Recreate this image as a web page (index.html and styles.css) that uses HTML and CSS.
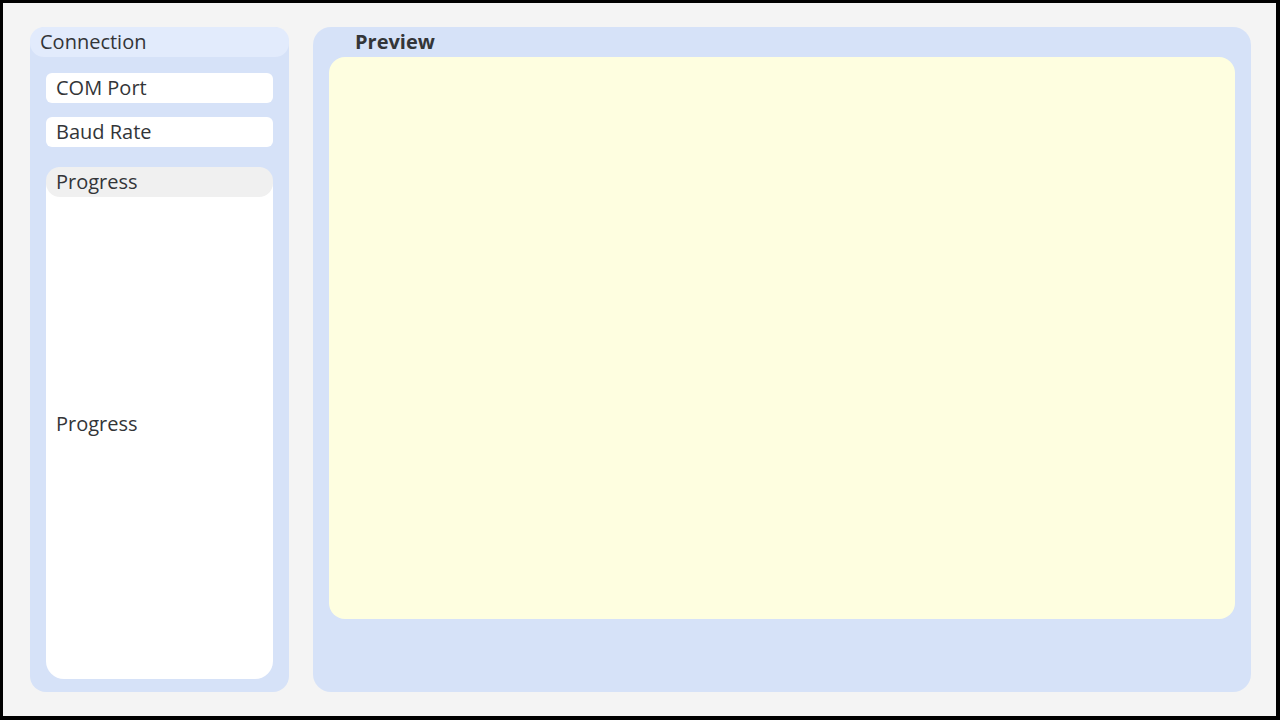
FILE: index.html
```html
<!DOCTYPE html>
<html>
<head>
<meta charset="utf-8">
<link rel="stylesheet" href="styles.css">
</head>
<body>
<div class="frame">
  <aside class="panel left">
    <div class="panel-head">Connection</div>
    <div class="fields">
      <div class="field">COM Port</div>
      <div class="field">Baud Rate</div>
    </div>
    <div class="card">
      <div class="card-head">Progress</div>
      <div class="card-body">Progress</div>
    </div>
  </aside>
  <main class="panel right">
    <div class="preview-head">Preview</div>
    <div class="preview-area"></div>
  </main>
</div>
</body>
</html>
```
FILE: styles.css
```css
html, body {
  margin: 0;
  padding: 0;
}
body {
  font-family: "Open Sans", "Noto Sans", sans-serif;
  color: #333538;
}
.frame {
  width: 1280px;
  height: 720px;
  box-sizing: border-box;
  border-style: solid;
  border-color: #000;
  border-width: 3px 4px 4px 3px;
  background: #f4f4f4;
  padding: 24px 25px 24px 27px;
  display: flex;
  gap: 24px;
}
.panel {
  background: #d6e2f8;
  display: flex;
  flex-direction: column;
}
.left {
  width: 259px;
  border-radius: 16px;
  padding-bottom: 13px;
  box-sizing: border-box;
}
.panel-head {
  height: 30px;
  line-height: 30px;
  background: #e2ebfc;
  border-radius: 14px;
  padding-left: 10px;
  font-size: 20px;
}
.fields {
  display: flex;
  flex-direction: column;
  gap: 14px;
  margin: 16px 16px 0;
}
.field {
  height: 30px;
  line-height: 30px;
  background: #fff;
  border-radius: 6px;
  padding-left: 10px;
  font-size: 20px;
}
.card {
  margin: 20px 16px 0;
  flex: 1;
  background: #fff;
  border-radius: 18px;
  display: flex;
  flex-direction: column;
}
.card-head {
  height: 30px;
  line-height: 30px;
  background: #f0f0f0;
  border-radius: 14px;
  padding-left: 10px;
  font-size: 20px;
}
.card-body {
  flex: 1;
  display: flex;
  align-items: center;
  padding-left: 10px;
  padding-bottom: 30px;
  font-size: 20px;
}
.right {
  flex: 1;
  border-radius: 18px;
  padding: 0 16px 73px;
}
.preview-head {
  height: 30px;
  line-height: 30px;
  padding-left: 26px;
  font-size: 20px;
  font-weight: 700;
}
.preview-area {
  flex: 1;
  background: #fefee0;
  border-radius: 16px;
}
```
